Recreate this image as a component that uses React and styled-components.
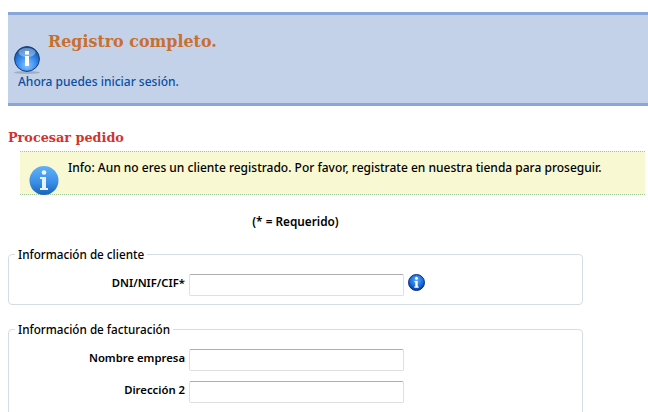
import React from 'react';
import styled, { createGlobalStyle } from 'styled-components';

const GlobalStyle = createGlobalStyle`
  html, body {
    margin: 0;
    padding: 0;
    background: #fff;
    overflow: hidden;
  }
  body {
    font-family: "Noto Sans", "DejaVu Sans", sans-serif;
    font-size: 12px;
    color: #000;
  }
`;

const Page = styled.div`
  width: 648px;
  height: 412px;
  overflow: hidden;
  box-sizing: border-box;
  padding: 12px 0 0 8px;
`;

const Banner = styled.div`
  box-sizing: border-box;
  height: 94px;
  background: #c3d2e8;
  border-top: 3px solid #86a6dc;
  border-bottom: 3px solid #86a6dc;
  padding-left: 6px;
`;

const BannerRow = styled.div`
  display: flex;
  align-items: flex-start;
  gap: 8px;
`;

const BannerIcon = styled.div`
  margin-top: 31px;
  width: 26px;
  height: 28px;
  flex: none;
`;

const BannerTitle = styled.h1`
  margin: 15px 0 0;
  font-family: "DejaVu Serif", "Liberation Serif", serif;
  font-size: 15.9px;
  line-height: 24px;
  font-weight: bold;
  color: #c96f2e;
`;

const BannerText = styled.p`
  margin: 0 0 0 4px;
  font-size: 12px;
  line-height: 16px;
  font-weight: 500;
  color: #0b4ea2;
`;

const SectionTitle = styled.h2`
  margin: 23px 0 0;
  font-family: "DejaVu Serif", "Liberation Serif", serif;
  font-size: 12.8px;
  line-height: 18px;
  font-weight: bold;
  color: #d2332f;
`;

const Notice = styled.div`
  box-sizing: border-box;
  margin: 4px 3px 0 12px;
  height: 44px;
  background: #f8f8d2;
  border-top: 1px dotted #9cc98f;
  border-bottom: 1px dotted #9cc98f;
  display: flex;
  align-items: flex-start;
  padding-left: 9px;
  gap: 9px;
`;

const NoticeIcon = styled.div`
  margin-top: 14px;
  width: 30px;
  height: 29px;
  flex: none;
`;

const NoticeText = styled.p`
  margin: 8px 0 0;
  font-size: 12px;
  line-height: 16px;
  font-weight: 500;
  white-space: nowrap;
`;

const Required = styled.div`
  margin-top: 18px;
  width: 575px;
  text-align: center;
  font-size: 11.8px;
  line-height: 16px;
  font-weight: 600;
`;

const Group = styled.fieldset`
  box-sizing: border-box;
  margin: ${(p) => p.$top}px 0 0;
  width: 575px;
  height: ${(p) => p.$height}px;
  padding: 8px 0 0;
  border: 1px solid #d4dde6;
  border-radius: 4px;
`;

const Legend = styled.legend`
  margin-left: 6px;
  padding: 0 3px;
  font-size: 11.7px;
  line-height: 14px;
  font-weight: 500;
`;

const Field = styled.div`
  display: flex;
  align-items: center;
  height: 32px;
`;

const FieldLabel = styled.label`
  width: 176px;
  padding-bottom: 5px;
  text-align: right;
  font-size: 11.3px;
  font-weight: 600;
`;

const TextInput = styled.input`
  box-sizing: border-box;
  margin-left: 4px;
  width: 215px;
  height: 22px;
  background: #fff;
  border: 1px solid #dcdfe3;
  border-top-color: #adadad;
  border-radius: 2px;
  padding: 0;
`;

const HelpIcon = styled.div`
  margin: 0 0 5px 4px;
  width: 17px;
  height: 17px;
`;

const GlossyInfo = ({ id }) => (
  <svg width="100%" height="100%" viewBox="0 0 26 28">
    <defs>
      <radialGradient id={id} cx="50%" cy="75%" r="70%">
        <stop offset="0%" stopColor="#8cc8ff" />
        <stop offset="55%" stopColor="#3388ee" />
        <stop offset="100%" stopColor="#14509f" />
      </radialGradient>
    </defs>
    <ellipse cx="13" cy="26.5" rx="13" ry="1.5" fill="#8a94a6" opacity="0.6" />
    <circle cx="13" cy="13" r="12.4" fill={`url(#${id})`} stroke="#123a78" strokeWidth="1" />
    <ellipse cx="13" cy="6.5" rx="8.5" ry="4.5" fill="#fff" opacity="0.35" />
    <rect x="11" y="5" width="4" height="3.6" fill="#fff" />
    <rect x="11" y="10" width="4" height="10" fill="#fff" />
  </svg>
);

const DiscInfo = ({ id }) => (
  <svg width="100%" height="100%" viewBox="0 0 30 29">
    <defs>
      <linearGradient id={id} x1="0" y1="0" x2="0" y2="1">
        <stop offset="0%" stopColor="#62b2f8" />
        <stop offset="55%" stopColor="#3c8fe8" />
        <stop offset="100%" stopColor="#1864b8" />
      </linearGradient>
    </defs>
    <circle cx="15" cy="14.5" r="14.5" fill={`url(#${id})`} />
    <circle cx="15" cy="6.5" r="2.3" fill="#f4fbff" />
    <path d="M11 11h6v11h2v2h-8v-2h2v-9h-2z" fill="#e4f3ff" />
  </svg>
);

const SmallInfo = ({ id }) => (
  <svg width="100%" height="100%" viewBox="0 0 17 17">
    <defs>
      <radialGradient id={id} cx="50%" cy="35%" r="65%">
        <stop offset="0%" stopColor="#5fb0f6" />
        <stop offset="65%" stopColor="#1568d8" />
        <stop offset="100%" stopColor="#0a2f9c" />
      </radialGradient>
    </defs>
    <circle cx="8.5" cy="8.5" r="8" fill={`url(#${id})`} stroke="#0a2f8c" strokeWidth="1" />
    <circle cx="8.5" cy="4.3" r="1.5" fill="#fff" />
    <path d="M6.5 7h3.2v5.4h1v1.3h-4.4v-1.3h1V8.2h-.8z" fill="#fff" />
  </svg>
);

export default function App() {
  return (
    <Page>
      <GlobalStyle />
      <Banner>
        <BannerRow>
          <BannerIcon>
            <GlossyInfo id="glossy" />
          </BannerIcon>
          <BannerTitle>Registro completo.</BannerTitle>
        </BannerRow>
        <BannerText>Ahora puedes iniciar sesión.</BannerText>
      </Banner>

      <SectionTitle>Procesar pedido</SectionTitle>
      <Notice>
        <NoticeIcon>
          <DiscInfo id="disc" />
        </NoticeIcon>
        <NoticeText>Info: Aun no eres un cliente registrado. Por favor, registrate en nuestra tienda para proseguir.</NoticeText>
      </Notice>

      <Required>(* = Requerido)</Required>

      <Group $top={18} $height={58}>
        <Legend>Información de cliente</Legend>
        <Field>
          <FieldLabel>DNI/NIF/CIF*</FieldLabel>
          <TextInput />
          <HelpIcon>
            <SmallInfo id="help" />
          </HelpIcon>
        </Field>
      </Group>

      <Group $top={17} $height={120}>
        <Legend>Información de facturación</Legend>
        <Field>
          <FieldLabel>Nombre empresa</FieldLabel>
          <TextInput />
        </Field>
        <Field>
          <FieldLabel>Dirección 2</FieldLabel>
          <TextInput />
        </Field>
      </Group>
    </Page>
  );
}
